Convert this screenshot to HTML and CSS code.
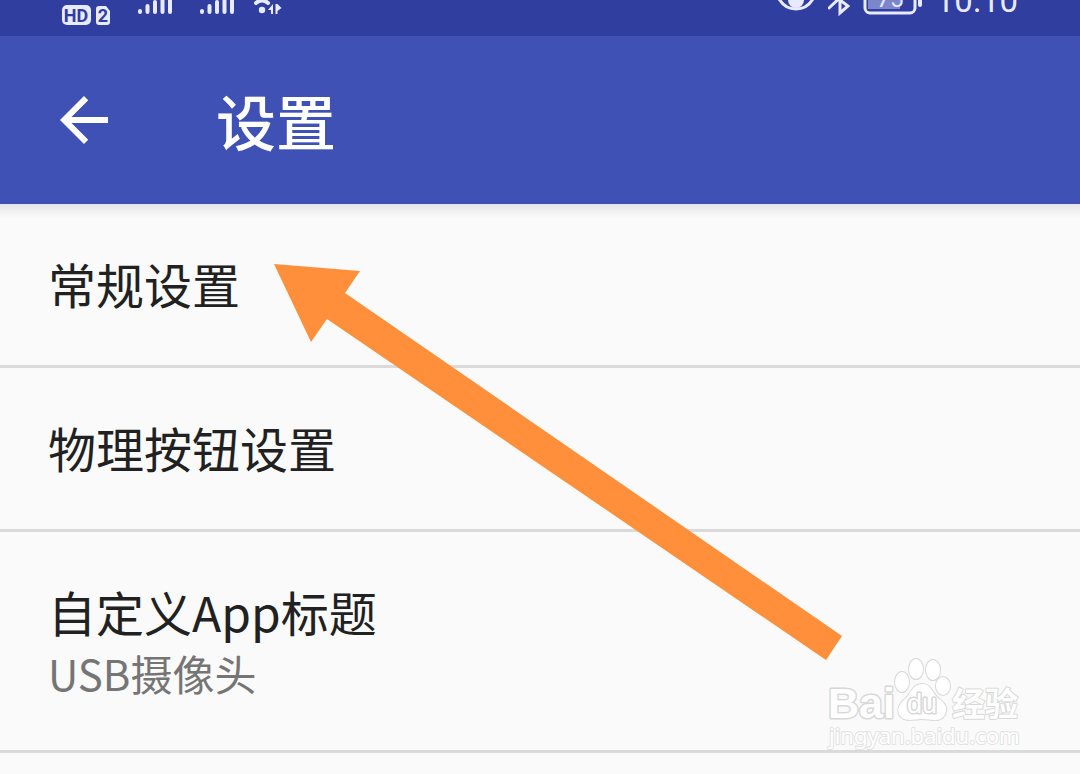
FILE: index.html
```html
<!DOCTYPE html>
<html lang="zh-CN">
<head>
    <meta charset="UTF-8">
    <meta name="viewport" content="width=device-width, initial-scale=1.0">
    <title>设置</title>
    <link rel="stylesheet" href="styles.css">
</head>

<body>

<!-- Status bar -->
<div class="status-bar">
    <div class="status-left">
        <svg class="status-icon" width="48" height="36" viewBox="0 0 48 36">
            <rect x="0" y="5" width="29" height="20" rx="5"/>
            <path d="M37 6h7l4 5v11a3 3 0 0 1-3 3h-8a3 3 0 0 1-3-3V9a3 3 0 0 1 3-3z"/>
            <text class="badge-text" x="14" y="22" text-anchor="middle">HD</text>
            <text class="badge-text" x="41" y="22" text-anchor="middle">2</text>
        </svg>
        <svg class="status-icon" width="34" height="36" viewBox="0 0 34 36">
            <path class="bars" d="M2 11v1M9.500 6v6M17 2v10M24.500-4v16M32-8v20"/>
        </svg>
        <svg class="status-icon" width="34" height="36" viewBox="0 0 34 36">
            <path class="bars" d="M2 11v1M9.500 6v6M17 2v10M24.500-4v16M32-8v20"/>
        </svg>
        <svg class="status-icon status-wifi" width="28" height="36" viewBox="0 0 28 36">
            <path class="wave" d="M2 3Q8-2 14 3"/>
            <circle cx="8" cy="10" r="3.200"/>
            <path d="M19 4v10h-2v-4h-3zM21.500 4v10h2v-3l4-3-4-4z"/>
        </svg>
    </div>
    <div class="status-right">
        <svg class="status-icon" width="38" height="36" viewBox="0 0 38 36">
            <path class="line" d="M1-3C9 13 29 13 37-3"/>
            <circle cx="19" cy="0" r="8"/>
        </svg>
        <svg class="status-icon" width="22" height="36" viewBox="0 0 22 36">
            <path class="line" d="M1 8L18-8M4-6l16 12-8 7V-8"/>
        </svg>
        <svg class="status-icon" width="60" height="36" viewBox="0 0 60 36">
            <rect class="charge" x="5" y="-10" width="32" height="19"/>
            <rect class="line" x="2" y="-14" width="50" height="27" rx="5"/>
            <rect x="55" y="-6" width="4" height="13" rx="2"/>
            <text class="charge-text" x="27" y="7" text-anchor="middle">75</text>
        </svg>
        <span class="clock">10:10</span>
    </div>
</div>

<!-- Toolbar -->
<header class="toolbar">
    <button type="button" class="back-btn" aria-label="返回">
        <svg width="48" height="48" viewBox="4 4 16 16">
            <path d="M20 11H7.830l5.590-5.590L12 4l-8 8 8 8 1.410-1.410L7.830 13H20z"/>
        </svg>
    </button>
    <h1>设置</h1>
</header>

<!-- Settings list -->
<main class="settings">
    <a class="item" href="#general"><span class="item-title">常规设置</span></a>
    <a class="item" href="#buttons"><span class="item-title">物理按钮设置</span></a>
    <a class="item" href="#title">
        <span class="item-title">自定义App标题</span>
        <span class="item-summary">USB摄像头</span>
    </a>

    <svg class="pointer" width="570" height="398" viewBox="0 0 570 398">
        <path d="M0 0L86 7 71 29 568 372 552 396 53 55 37 78z"/>
    </svg>

    <svg class="watermark" width="210" height="100" viewBox="0 0 210 100">
        <text class="mark-brand" x="8" y="68">Bai</text>
        <ellipse cx="82" cy="32" rx="7" ry="10"/>
        <ellipse cx="96" cy="19" rx="7" ry="10"/>
        <ellipse cx="113" cy="20" rx="7" ry="10"/>
        <ellipse cx="123" cy="36" rx="7" ry="9"/>
        <path d="M102 34C93 34 91 43 86 48C79 54 77 59 79 64C83 73 94 69 102 69C111 69 119 73 124 66C130 57 123 52 117 47C112 42 111 34 102 34z"/>
        <text class="mark-du" x="102" y="63" text-anchor="middle">du</text>
        <text class="mark-cn" x="132" y="66">经验</text>
        <text class="mark-url" x="9" y="94">jingyan.baidu.com</text>
    </svg>
</main>

</body>
</html>
```

FILE: styles.css
```css
* {
    box-sizing: border-box;
}

body {
    margin: 0;
    font-family: "Noto Sans CJK SC", sans-serif;
    background-color: #fafafa;
    color: #212121;
}

/* Status bar */
.status-bar {
    display: flex;
    justify-content: space-between;
    height: 36px;
    padding: 0 62px;
    overflow: hidden;
    background-color: #303e9f;
    color: #e8eaff;
    font-family: Roboto, sans-serif;
}

.status-left,
.status-right {
    display: flex;
}

.status-left {
    gap: 28px;
}

.status-wifi {
    margin-left: -8px;
}

.status-right {
    gap: 13px;
}

.status-icon {
    fill: #e8eaff;
}

.status-icon .bars,
.status-icon .wave,
.status-icon .line {
    fill: none;
    stroke: #e8eaff;
    stroke-width: 4px;
    stroke-linecap: round;
}

.status-icon .line {
    stroke-width: 3px;
}

.status-icon .charge {
    fill: #7c86cb;
}

.badge-text {
    font-size: 18px;
    font-weight: bold;
    fill: #303e9f;
}

.charge-text {
    font-size: 24px;
}

.clock {
    margin-top: -16px;
    font-size: 33px;
    line-height: 33px;
}

/* Toolbar */
.toolbar {
    display: flex;
    align-items: center;
    gap: 108px;
    height: 168px;
    padding: 0 60px;
    background-color: #3f51b5;
    color: #fff;
}

.toolbar h1 {
    margin: 0;
    font-size: 60px;
    line-height: 72px;
    font-weight: 500;
}

.back-btn {
    padding: 0;
    border: none;
    background: none;
    cursor: pointer;
}

.back-btn svg {
    display: block;
    fill: #fff;
}

/* Settings list */
.settings {
    position: relative;
    background: linear-gradient(#e6e6e6, #fafafa 14px);
}

.item {
    display: flex;
    flex-direction: column;
    padding: 47px 48px 49px;
    border-bottom: 3px solid #dadada;
    color: inherit;
    text-decoration: none;
}

.item-title {
    font-size: 48px;
    line-height: 65px;
}

.item-summary {
    font-size: 42px;
    line-height: 57px;
    color: #757575;
}

/* Arrow over the list */
.pointer {
    position: absolute;
    left: 274px;
    top: 60px;
    fill: #ff8f3b;
    pointer-events: none;
}

.watermark {
    position: absolute;
    right: 50px;
    bottom: 3px;
    fill: #fff;
    stroke: #d8d8d8;
    stroke-width: 2px;
    stroke-linejoin: round;
    paint-order: stroke;
    pointer-events: none;
}

.mark-brand {
    font: bold 43px "Liberation Sans", sans-serif;
    stroke-width: 3px;
}

.mark-du {
    font: 27px "Liberation Sans", sans-serif;
    stroke-width: 3px;
}

.mark-cn {
    font: bold 33px "Noto Sans CJK SC", sans-serif;
}

.mark-url {
    font: 22px "Noto Sans", sans-serif;
    stroke: #e2e2e2;
}
```
